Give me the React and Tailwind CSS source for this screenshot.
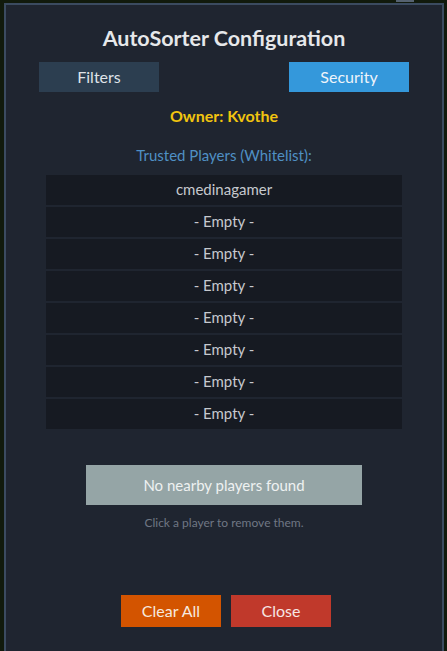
import React from 'react';

const slots = ['cmedinagamer', null, null, null, null, null, null, null];

export default function App() {
  return (
    <div className="relative h-[651px] w-[447px] overflow-hidden bg-[#111a0c] pl-[4px] pt-[3px] font-['Lato','Liberation_Sans',sans-serif]">
      {/* little thing peeking out behind the panel */}
      <div className="absolute left-[396px] top-0 h-[2px] w-[18px] bg-[#556270]" />

      <div className="relative h-[700px] w-[440px] border-2 border-[#3b4b60] bg-[#1f2530]">
        <h1 className="mt-[21px] text-center text-[21.5px] font-bold leading-6 text-[#e6e8ea]">
          AutoSorter Configuration
        </h1>

        <div className="mt-[12px] flex justify-between px-[33px]">
          <button className="h-[30px] w-[120px] bg-[#2c3e50] text-[16px] text-[#dfe3e8]">Filters</button>
          <button className="h-[30px] w-[120px] bg-[#3498db] text-[16px] text-[#eef4fa]">Security</button>
        </div>

        <p className="mt-[14px] text-center text-[16px] font-bold leading-5 text-[#f1c40f]">Owner: Kvothe</p>

        <p className="mt-[19px] text-center text-[15px] leading-5 text-[#4f90c4]">Trusted Players (Whitelist):</p>

        <ul className="mx-[40px] mt-[10px] flex flex-col gap-[2px]">
          {slots.map((name, i) => (
            <li
              key={i}
              className="flex h-[30px] items-center justify-center bg-[#161a22] pb-[1px] text-[15px] text-[#c6c9ce]"
            >
              {name || '- Empty -'}
            </li>
          ))}
        </ul>

        <div className="mt-[36px] flex justify-center">
          <button className="h-[40px] w-[276px] bg-[#95a5a6] text-[15px] text-[#eef1f1]">No nearby players found</button>
        </div>

        <p className="mt-[10px] text-center text-[12px] leading-4 text-[#6f7784]">Click a player to remove them.</p>

        <div className="mt-[64px] flex justify-center gap-[10px] pl-[4px]">
          <button className="h-[32px] w-[100px] bg-[#d35400] text-[16px] text-[#f6e9df]">Clear All</button>
          <button className="h-[32px] w-[100px] bg-[#c0392b] text-[16px] text-[#f6e6e4]">Close</button>
        </div>
      </div>
    </div>
  );
}
